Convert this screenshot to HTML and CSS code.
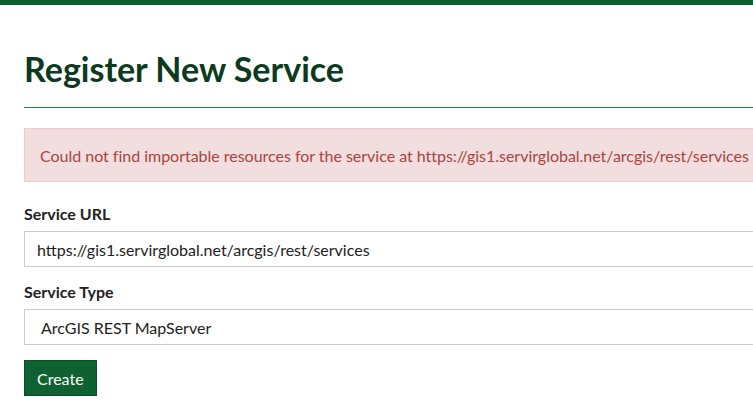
FILE: index.html
```html
<!DOCTYPE html>
<html>
<head>
<meta charset="utf-8">
<link rel="stylesheet" href="styles.css">
</head>
<body>
<div class="topbar"></div>
<main class="container">
  <h1 class="title">Register New Service</h1>
  <hr class="rule">
  <div class="alert">Could not find importable resources for the service at https://gis1.servirglobal.net/arcgis/rest/services</div>
  <form class="form">
    <div class="group">
      <label class="label">Service URL</label>
      <div class="field">https://gis1.servirglobal.net/arcgis/rest/services</div>
    </div>
    <div class="group">
      <label class="label">Service Type</label>
      <div class="field select">ArcGIS REST MapServer</div>
    </div>
    <button type="button" class="btn">Create</button>
  </form>
</main>
</body>
</html>
```
FILE: styles.css
```css
html, body {
  margin: 0;
  padding: 0;
  overflow: hidden;
  background: #fff;
}
body {
  font-family: Lato, "Open Sans", sans-serif;
  font-size: 16px;
  color: #222;
}
.topbar {
  height: 5px;
  background: #0b5e2e;
}
.container {
  width: 1000px;
  padding: 0 0 0 24px;
}
.title {
  margin: 42px 0 0;
  font-size: 34px;
  font-weight: 700;
  line-height: 44px;
  color: #0b3a1e;
}
.rule {
  margin: 16px 0 0;
  border: 0;
  border-top: 1px solid #2b7a42;
}
.alert {
  margin-top: 20px;
  height: 54px;
  box-sizing: border-box;
  padding: 0 15px;
  display: flex;
  align-items: center;
  background: #f2dede;
  border: 1px solid #ebccd1;
  color: #a94442;
  letter-spacing: -0.02px;
}
.form {
  margin-top: 22px;
  display: flex;
  flex-direction: column;
}
.group {
  display: flex;
  flex-direction: column;
  gap: 7px;
  margin-bottom: 15px;
}
.label {
  font-weight: 700;
  font-size: 16px;
  line-height: 20px;
  color: #222;
}
.field {
  height: 36px;
  box-sizing: border-box;
  border: 1px solid #ccc;
  padding: 0 12px;
  display: flex;
  align-items: center;
  color: #222;
}
.select {
  padding-left: 16px;
}
.btn {
  align-self: flex-start;
  height: 36px;
  padding: 0 12px;
  font-family: Lato, sans-serif;
  font-size: 16px;
  color: #fff;
  background: #0e6232;
  border: 1px solid #0a4d27;
  cursor: pointer;
}
```
